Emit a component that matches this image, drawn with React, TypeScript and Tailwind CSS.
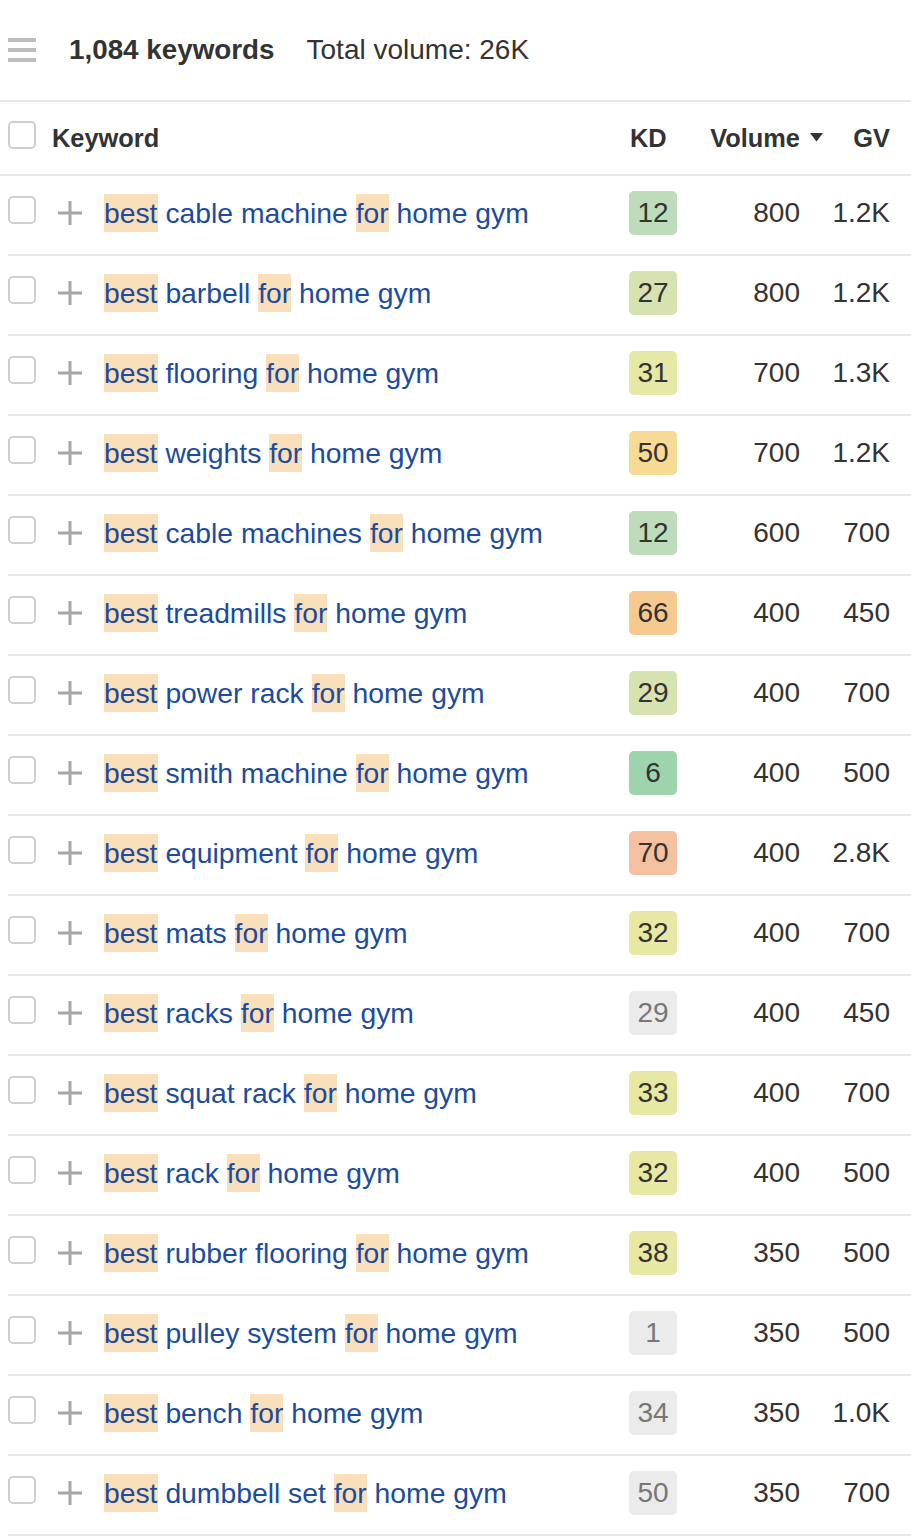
import React from 'react';

type Row = { kw: string; kd: number; kdBg: string; gray?: boolean; vol: string; gv: string };

const rows: Row[] = [
  { kw: 'cable machine', kd: 12, kdBg: 'bg-[#bddcba]', vol: '800', gv: '1.2K' },
  { kw: 'barbell', kd: 27, kdBg: 'bg-[#d6e3b0]', vol: '800', gv: '1.2K' },
  { kw: 'flooring', kd: 31, kdBg: 'bg-[#e6e9a6]', vol: '700', gv: '1.3K' },
  { kw: 'weights', kd: 50, kdBg: 'bg-[#f7da93]', vol: '700', gv: '1.2K' },
  { kw: 'cable machines', kd: 12, kdBg: 'bg-[#bddcba]', vol: '600', gv: '700' },
  { kw: 'treadmills', kd: 66, kdBg: 'bg-[#f6c98f]', vol: '400', gv: '450' },
  { kw: 'power rack', kd: 29, kdBg: 'bg-[#d6e3b0]', vol: '400', gv: '700' },
  { kw: 'smith machine', kd: 6, kdBg: 'bg-[#9dd3ad]', vol: '400', gv: '500' },
  { kw: 'equipment', kd: 70, kdBg: 'bg-[#f4c0a0]', vol: '400', gv: '2.8K' },
  { kw: 'mats', kd: 32, kdBg: 'bg-[#e8e8a5]', vol: '400', gv: '700' },
  { kw: 'racks', kd: 29, kdBg: 'bg-[#ebebec]', gray: true, vol: '400', gv: '450' },
  { kw: 'squat rack', kd: 33, kdBg: 'bg-[#e8e8a5]', vol: '400', gv: '700' },
  { kw: 'rack', kd: 32, kdBg: 'bg-[#e8e8a5]', vol: '400', gv: '500' },
  { kw: 'rubber flooring', kd: 38, kdBg: 'bg-[#e8e8a5]', vol: '350', gv: '500' },
  { kw: 'pulley system', kd: 1, kdBg: 'bg-[#ebebec]', gray: true, vol: '350', gv: '500' },
  { kw: 'bench', kd: 34, kdBg: 'bg-[#ebebec]', gray: true, vol: '350', gv: '1.0K' },
  { kw: 'dumbbell set', kd: 50, kdBg: 'bg-[#ebebec]', gray: true, vol: '350', gv: '700' },
];

const Checkbox = ({ className = '' }: { className?: string }) => (
  <div className={`w-[28px] h-[28px] shrink-0 rounded-[5px] border-2 border-[#cfcfcf] bg-white ${className}`} />
);

export default function App() {
  return (
    <div className="w-[911px] bg-white text-[#333] font-['Liberation_Sans',Arial,sans-serif]">
      {/* Summary bar */}
      <div className="h-[102px] flex items-center pl-2 border-b-2 border-[#e8e8e8]">
        <div className="w-[28px] flex flex-col gap-[6px]">
          <div className="h-[4px] bg-[#bdbdbd]" />
          <div className="h-[4px] bg-[#bdbdbd]" />
          <div className="h-[4px] bg-[#bdbdbd]" />
        </div>
        <span className="ml-[33px] text-[27.8px] font-bold">1,084 keywords</span>
        <span className="ml-[32px] text-[28px]">Total volume: 26K</span>
      </div>

      {/* Column headers */}
      <div className="h-[74px] flex items-center pl-2 border-b-2 border-[#e8e8e8] text-[25.4px] font-bold text-[#333]">
        <Checkbox className="mb-[6px]" />
        <div className="flex-1 ml-[16px]">Keyword</div>
        <div className="w-[48px] pl-[1px]">KD</div>
        <div className="w-[146px] flex items-center justify-end gap-[10px]">
          <span>Volume</span>
          <svg width="13" height="9" viewBox="0 0 13 9">
            <path d="M0 0h13L6.5 8.5z" fill="#333" />
          </svg>
        </div>
        <div className="w-[67px] text-right">GV</div>
        <div className="w-[21px]" />
      </div>

      {/* Rows */}
      {rows.map((r, i) => (
        <div key={i} className="h-[80px] ml-2 pb-[5px] flex items-center border-b-2 border-[#e8e8e8]">
          <Checkbox className="mb-[6px]" />
          <svg width="24" height="24" viewBox="0 0 24 24" className="ml-[22px] shrink-0">
            <path d="M12 0v24M0 12h24" stroke="#a6a6a6" strokeWidth="3" />
          </svg>
          <div className="flex-1 ml-[22px] text-[28.3px] text-[#1c4c9e] leading-[38px] whitespace-nowrap">
            <span className="inline-block bg-[#f9dfba]">best</span> {r.kw}{' '}
            <span className="inline-block bg-[#f9dfba]">for</span> home gym
          </div>
          <div
            className={`w-[48px] h-[44px] rounded-[5px] flex items-center justify-center text-[28px] ${r.kdBg} ${
              r.gray ? 'text-[#777]' : 'text-[#333]'
            }`}
          >
            {r.kd}
          </div>
          <div className="w-[123px] text-right text-[28px]">{r.vol}</div>
          <div className="w-[90px] text-right text-[28px]">{r.gv}</div>
          <div className="w-[21px]" />
        </div>
      ))}
    </div>
  );
}
